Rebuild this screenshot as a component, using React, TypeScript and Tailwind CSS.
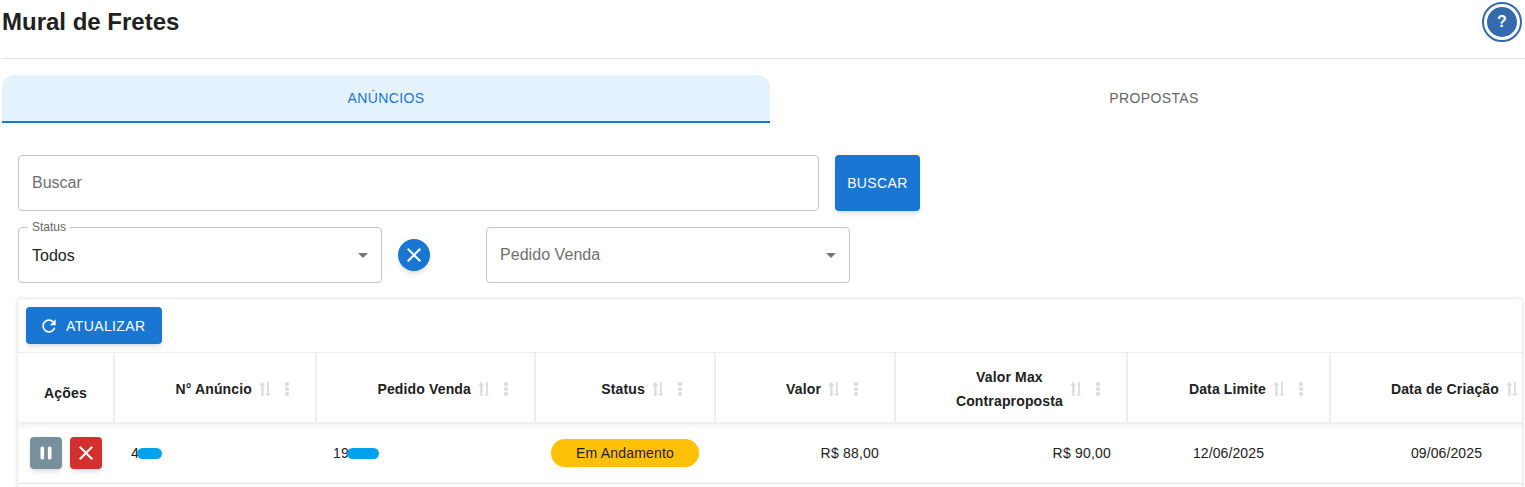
import type { ReactNode } from "react";

const closePath =
  "M19 6.41 17.59 5 12 10.59 6.41 5 5 6.41 10.59 12 5 17.59 6.41 19 12 13.41 17.59 19 19 17.59 13.41 12z";

const Icon = ({ d, className }: { d: string; className: string }) => (
  <svg viewBox="0 0 24 24" fill="currentColor" className={className}>
    <path d={d} />
  </svg>
);

const HeaderCell = ({ className, children }: { className: string; children: ReactNode }) => (
  <div className={`flex shrink-0 items-center justify-end border-r-2 border-[#eeeeee] pt-[2px] ${className}`}>
    <div className="text-center text-sm leading-6 font-bold tracking-[0.15px] text-[#212121]">{children}</div>
    {/* ordenar */}
    <svg viewBox="0 0 13 14" fill="#dcdcdc" className="ml-[7px] h-[14px] w-[13px] shrink-0">
      <path d="M2.2 14V3.4H0L3.2 0l3.2 3.4H4.6V14z" />
      <path d="M8 0h1.8v12H12l-3.1 2-3-2H8z" />
    </svg>
    {/* menu */}
    <svg viewBox="0 0 20 20" fill="#dcdcdc" className="ml-[5px] h-5 w-5 shrink-0">
      <circle cx="10" cy="5.2" r="2.1" />
      <circle cx="10" cy="10" r="2.1" />
      <circle cx="10" cy="14.8" r="2.1" />
    </svg>
  </div>
);

const Caret = () => (
  <span className="block h-0 w-0 border-x-[5px] border-t-[5px] border-x-transparent border-t-[#757575]"></span>
);

const App = () => {
  return (
    <div className="h-[487px] w-[1525px] overflow-hidden bg-white pl-[2px] font-['Liberation_Sans',Arial,sans-serif] text-[#212121]">
      {/* Titulo */}
      <div className="flex h-[59px] items-start justify-between border-b border-[#e0e0e0] pr-[3px] pt-[2px]">
        <h1 className="text-2xl leading-10 font-bold">Mural de Fretes</h1>
        <div className="flex h-10 w-10 items-center justify-center rounded-full border-2 border-[#356aac] bg-white">
          <div className="flex h-[30px] w-[30px] items-center justify-center rounded-full bg-[#356aac] text-base font-bold text-white">
            ?
          </div>
        </div>
      </div>

      {/* Abas */}
      <div className="mt-4 flex h-12 w-[1536px] text-sm tracking-[0.4px]">
        <div className="flex w-[768px] items-center justify-center rounded-t-xl border-b-2 border-[#1976d2] bg-[#e3f2fd] text-[#1976d2]">
          ANÚNCIOS
        </div>
        <div className="flex w-[768px] items-center justify-center border-b-2 border-transparent text-[#666666]">
          PROPOSTAS
        </div>
      </div>

      <div className="pl-4 pr-[3px] pt-8">
        <div className="flex gap-4">
          <div className="flex h-14 w-[801px] items-center rounded border border-[#c4c4c4] px-[13px] text-base text-[#6f6f6f]">
            Buscar
          </div>
          <button className="h-14 w-[85px] rounded bg-[#1976d2] text-sm tracking-[0.4px] text-white shadow-md">
            BUSCAR
          </button>
        </div>

        <div className="mt-4 flex items-center">
          <div className="relative flex h-14 w-[364px] items-center justify-between rounded border border-[#c4c4c4] pl-[13px] pr-[8px] pt-px text-base">
            <span className="absolute -top-[8px] left-[9px] bg-white px-[4px] text-xs leading-[14px] text-[#666666]">
              Status
            </span>
            Todos
            <span className="mr-[5px]">
              <Caret />
            </span>
          </div>
          <button className="ml-4 flex h-8 w-8 items-center justify-center rounded-full bg-[#1976d2] text-white shadow-md">
            <Icon d={closePath} className="h-6 w-6" />
          </button>
          <div className="ml-14 flex h-14 w-[364px] items-center justify-between rounded border border-[#c4c4c4] pl-[13px] pr-[8px] text-base tracking-[0.05px] text-[#6f6f6f]">
            Pedido Venda
            <span className="mr-[5px] pt-px">
              <Caret />
            </span>
          </div>
        </div>

        {/* Tabela */}
        <div className="mt-4 overflow-hidden rounded bg-white pb-10 shadow-[0_0_4px_rgba(0,0,0,0.18)]">
          <div className="px-2 py-2">
            <button className="flex h-[37px] w-[136px] items-center rounded bg-[#1976d2] pl-[13px] text-sm tracking-[0.4px] text-white shadow-md">
              <Icon
                d="M17.65 6.35C16.2 4.9 14.21 4 12 4c-4.42 0-7.99 3.58-7.99 8s3.57 8 7.99 8c3.73 0 6.84-2.55 7.73-6h-2.08c-.82 2.33-3.04 4-5.65 4-3.31 0-6-2.69-6-6s2.69-6 6-6c1.66 0 3.14.69 4.22 1.78L13 11h7V4l-2.35 2.35z"
                className="mr-[7px] h-5 w-5"
              />
              ATUALIZAR
            </button>
          </div>

          <div className="flex h-[71px] w-max border-y border-[#eeeeee] shadow-[0_3px_6px_rgba(0,0,0,0.07)]">
            <div className="flex w-[97px] shrink-0 items-center justify-center border-r-2 border-[#eeeeee] pt-[10px] text-sm font-bold tracking-[0.2px]">
              Ações
            </div>
            <HeaderCell className="w-[202px] pr-[18px]">N° Anúncio</HeaderCell>
            <HeaderCell className="w-[219px] pr-[18px]">Pedido Venda</HeaderCell>
            <HeaderCell className="w-[180px] pr-[24px]">Status</HeaderCell>
            <HeaderCell className="w-[180px] pr-[28px]">Valor</HeaderCell>
            <HeaderCell className="w-[232px] pr-[18px]">
              Valor Max
              <br />
              Contraproposta
            </HeaderCell>
            <HeaderCell className="w-[203px] pr-[18px]">Data Limite</HeaderCell>
            <HeaderCell className="w-[231px] pr-[16px]">Data de Criação</HeaderCell>
          </div>

          <div className="flex h-[61px] w-max items-center border-b border-[#e0e0e0] text-sm tracking-[0.1px]">
            <div className="flex w-[97px] shrink-0 gap-2 pl-3">
              <button className="flex h-8 w-8 items-center justify-center rounded bg-[#78909c] text-white shadow-md">
                <svg viewBox="0 0 14 14" fill="currentColor" className="h-[14px] w-[14px]">
                  <rect x="1.5" y="0.5" width="3.6" height="13" rx="1.6" />
                  <rect x="8.9" y="0.5" width="3.6" height="13" rx="1.6" />
                </svg>
              </button>
              <button className="flex h-8 w-8 items-center justify-center rounded bg-[#d32f2f] text-white shadow-md">
                <Icon d={closePath} className="h-6 w-6" />
              </button>
            </div>
            <div className="flex w-[202px] shrink-0 items-center pl-4">
              4<span className="-ml-[2px] h-[11px] w-[25px] rounded-full bg-[#00a2ed]"></span>
            </div>
            <div className="flex w-[219px] shrink-0 items-center pl-4">
              19<span className="-ml-[2px] h-[11px] w-[32px] rounded-full bg-[#00a2ed]"></span>
            </div>
            <div className="w-[180px] shrink-0 pl-[15px]">
              <div className="flex h-7 w-[148px] items-center justify-center rounded-full bg-[#ffc107] tracking-[0.2px]">
                Em Andamento
              </div>
            </div>
            <div className="w-[180px] shrink-0 pr-[17px] text-right tracking-[0.2px]">R$ 88,00</div>
            <div className="w-[232px] shrink-0 pr-[17px] text-right tracking-[0.2px]">R$ 90,00</div>
            <div className="w-[203px] shrink-0 pr-[2px] text-center">12/06/2025</div>
            <div className="w-[231px] shrink-0 text-center">09/06/2025</div>
          </div>
        </div>
      </div>
    </div>
  );
};

export default App;
